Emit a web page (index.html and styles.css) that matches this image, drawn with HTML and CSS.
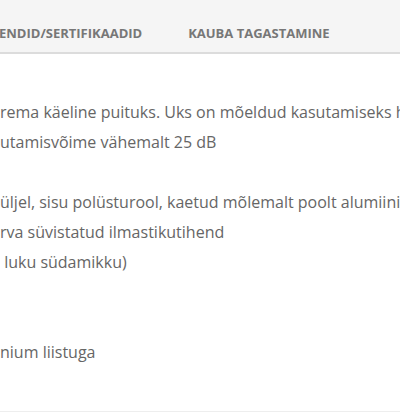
FILE: index.html
```html
<!DOCTYPE html>
<html lang="et">
<head>
<meta charset="utf-8">
<link rel="stylesheet" href="styles.css">
</head>
<body>
<div class="tabs">
  <span class="tab tab-first">ENDID/SERTIFIKAADID</span>
  <span class="tab">KAUBA TAGASTAMINE</span>
</div>
<div class="content">
  <div class="line">rema käeline puituks. Uks on mõeldud kasutamiseks hoonetes</div>
  <div class="line">utamisvõime vähemalt 25 dB</div>
  <div class="line"></div>
  <div class="line">üljel, sisu polüsturool, kaetud mõlemalt poolt alumiiniumiga</div>
  <div class="line">rva süvistatud ilmastikutihend</div>
  <div class="line">&nbsp;luku südamikku)</div>
  <div class="line"></div>
  <div class="line"></div>
  <div class="line">nium liistuga</div>
</div>
<div class="footer-line"></div>
</body>
</html>
```
FILE: styles.css
```css
html, body {
  margin: 0;
  padding: 0;
  background: #fff;
  overflow: hidden;
}
body {
  width: 400px;
  height: 412px;
  font-family: "Open Sans", "Noto Sans", sans-serif;
}
.tabs {
  display: flex;
  align-items: center;
  box-sizing: border-box;
  height: 54px;
  padding-top: 13px;
  background: #f5f5f5;
  border-bottom: 2px solid #dcdcdc;
  white-space: nowrap;
}
.tab {
  font-size: 13px;
  font-weight: 700;
  color: #777;
  margin-right: 46px;
}
.tab-first {
  margin-left: -1px;
}
.content {
  padding-top: 43px;
  height: 314px;
  white-space: nowrap;
  overflow: hidden;
}
.line {
  font-size: 16px;
  line-height: 30px;
  height: 30px;
  color: #666;
}
.footer-line {
  border-top: 2px solid #eee;
}
```
